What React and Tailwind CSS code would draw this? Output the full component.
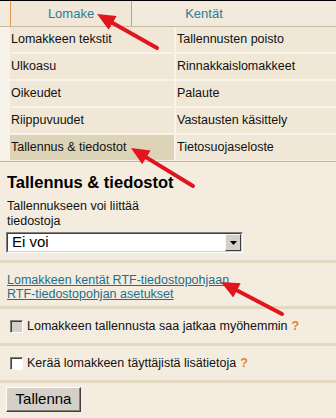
import React from "react";

const MENU = [
  ["Lomakkeen tekstit", "Tallennusten poisto"],
  ["Ulkoasu", "Rinnakkaislomakkeet"],
  ["Oikeudet", "Palaute"],
  ["Riippuvuudet", "Vastausten käsittely"],
  ["Tallennus & tiedostot", "Tietosuojaseloste"],
];

// red annotation arrow, tip at (x2, y2)
function Arrow({ x1, y1, x2, y2 }) {
  const dx = x2 - x1;
  const dy = y2 - y1;
  const len = Math.hypot(dx, dy);
  const ux = dx / len;
  const uy = dy / len;
  const hl = 18;
  const hw = 8;
  const bx = x2 - ux * hl;
  const by = y2 - uy * hl;
  const pts = `${x2},${y2} ${bx - uy * hw},${by + ux * hw} ${bx + uy * hw},${by - ux * hw}`;
  return (
    <g>
      <line x1={x1} y1={y1} x2={bx + ux * 3} y2={by + uy * 3} stroke="#e2141c" strokeWidth="4" strokeLinecap="round" />
      <polygon points={pts} fill="#e2141c" />
    </g>
  );
}

function Checkbox({ disabled }) {
  return (
    <span
      className={`inline-block w-[13px] h-[13px] border border-t-[#808080] border-l-[#808080] border-b-white border-r-white shadow-[inset_1px_1px_0_#404040] ${
        disabled ? "bg-[#d4d0c8]" : "bg-white"
      }`}
    />
  );
}

export default function App() {
  return (
    <div className="relative w-[336px] h-[418px] overflow-hidden bg-[#f4ecdf] text-[12.5px] text-[#111] font-['Liberation_Sans',Arial,sans-serif]">
      {/* Tabs */}
      <div className="flex h-[27px] border-t border-b border-t-black border-b-[#c6baa5] pl-[10px] bg-[#f2eadc]">
        <div className="w-[122px] flex items-center justify-center border-x border-[#e29a4a] text-[13px] text-[#2c7c99] bg-[#f0e7d8]">
          Lomake
        </div>
        <div className="w-[144px] flex items-center justify-center text-[13px] text-[#2c7c99]">Kentät</div>
      </div>

      {/* Menu */}
      <div className="grid grid-cols-[164px_1fr] gap-[2px] pl-[10px] bg-[#f8f3ea]">
        {MENU.flat().map((label) => (
          <div
            key={label}
            className={`h-[25px] flex items-center pl-px ${
              label === "Tallennus & tiedostot" ? "bg-[#ddd3b7]" : "bg-[#f0e7d7]"
            }`}
          >
            {label}
          </div>
        ))}
      </div>
      <div className="mt-px h-px bg-[#c2b6a1]" />

      {/* Content */}
      <h2 className="mt-[9px] px-[7px] text-[16.5px] leading-[22px] font-bold text-black">Tallennus &amp; tiedostot</h2>
      <div className="mt-[6px] px-[7px] w-[160px] leading-[15px]">Tallennukseen voi liittää tiedostoja</div>
      <div className="mt-[3px] ml-[6px] w-[237px] h-[21px] flex items-stretch border border-t-[#808080] border-l-[#808080] border-b-white border-r-white">
        <div className="flex-1 flex items-stretch border border-t-[#404040] border-l-[#404040] border-b-[#d4d0c8] border-r-[#d4d0c8] bg-white">
          <span className="flex-1 flex items-center pl-[4px] text-[15px] text-black">Ei voi</span>
          <span className="w-[16px] flex items-center justify-center bg-[#d4d0c8] border border-t-[#f4f4f4] border-l-[#f4f4f4] border-b-[#404040] border-r-[#404040]">
            <svg width="7" height="4" viewBox="0 0 7 4">
              <polygon points="0,0 7,0 3.5,4" fill="#000" />
            </svg>
          </span>
        </div>
      </div>

      <div className="mt-[7px] h-[3px] bg-[#e4d8c0]" />
      <div className="mt-[10px] px-[7px] leading-[14px] flex flex-col items-start">
        <a className="text-[#1d6f8c] underline">Lomakkeen kentät RTF-tiedostopohjaan</a>
        <a className="text-[#1d6f8c] underline">RTF-tiedostopohjan asetukset</a>
      </div>
      <div className="mt-[5px] h-[3px] bg-[#e4d8c0]" />

      <div className="h-[34px] flex items-center gap-[4px] pl-[10px]">
        <Checkbox disabled />
        <span>Lomakkeen tallennusta saa jatkaa myöhemmin</span>
        <span className="font-bold text-[#e4832c]">?</span>
      </div>
      <div className="h-[3px] bg-[#e4d8c0]" />
      <div className="h-[34px] flex items-center gap-[4px] pl-[10px]">
        <Checkbox />
        <span>Kerää lomakkeen täyttäjistä lisätietoja</span>
        <span className="font-bold text-[#e4832c]">?</span>
      </div>
      <div className="h-[3px] bg-[#e4d8c0]" />

      <div className="mt-[4px] ml-[6px] w-[75px] h-[25px] flex items-center justify-center bg-[#d4d0c8] border border-t-white border-l-white border-b-[#404040] border-r-[#404040] shadow-[inset_-1px_-1px_0_#808080] text-[15px] text-black">
        Tallenna
      </div>

      {/* Annotation arrows */}
      <svg className="absolute inset-0 pointer-events-none" width="336" height="418">
        <Arrow x1={157} y1={48} x2={97} y2={14} />
        <Arrow x1={193} y1={186} x2={131} y2={148} />
        <Arrow x1={282} y1={314} x2={221} y2={282} />
      </svg>
    </div>
  );
}
